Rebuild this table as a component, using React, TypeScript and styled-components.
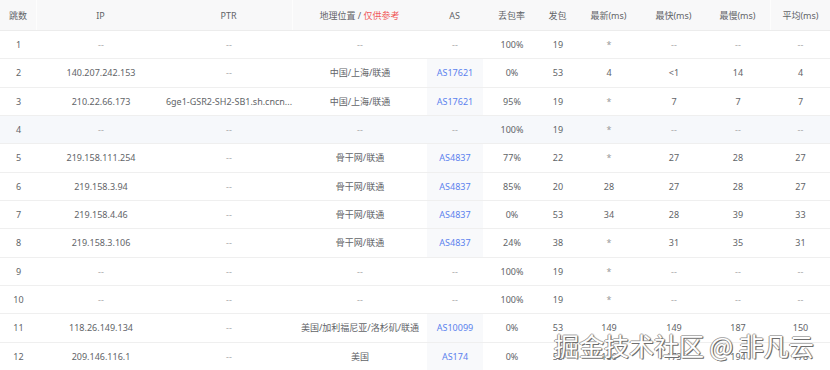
import React from "react";
import styled, { createGlobalStyle } from "styled-components";

const Global = createGlobalStyle`
  html, body { margin: 0; padding: 0; background: #ffffff; }
  body { font-family: "Noto Sans", "Noto Sans CJK SC", sans-serif; }
`;

const COLS = "37px 128px 128px 134px 56px 58px 34px 68px 62px 66px 59px";

const Wrap = styled.div`
  position: relative;
  width: 830px;
  height: 370px;
  overflow: hidden;
  background: #fff;
`;

const Table = styled.div`
  display: flex;
  flex-direction: column;
  width: 830px;
`;

const HeadRow = styled.div`
  display: grid;
  grid-template-columns: ${COLS};
  height: 31px;
  box-sizing: border-box;
  background: #f8f8f9;
  border-bottom: 1px solid #ececec;
`;

const HeadCell = styled.div<{ $sep?: boolean }>`
  display: flex;
  align-items: center;
  justify-content: center;
  font-size: 9px;
  color: #626468;
  white-space: pre;
  border-right: 1px solid ${(p) => (p.$sep ? "#fdfdfd" : "transparent")};
  &:last-child { border-right: none; }
`;

const Red = styled.span`
  color: #f05a5a;
`;

const Row = styled.div<{ $hl?: boolean }>`
  display: grid;
  grid-template-columns: ${COLS};
  height: 28.33px;
  box-sizing: border-box;
  border-bottom: 1px solid #efefef;
  background: ${(p) => (p.$hl ? "#f6f8fb" : "#ffffff")};
`;

type Tone = "text" | "dim" | "star" | "link";

const Cell = styled.div<{ $tone: Tone; $shade?: boolean }>`
  display: flex;
  align-items: center;
  justify-content: center;
  font-size: 9px;
  white-space: nowrap;
  overflow: hidden;
  background: ${(p) => (p.$shade ? "#f8f9fb" : "transparent")};
  color: ${(p) =>
    p.$tone === "link"
      ? "#5b82ee"
      : p.$tone === "dim"
      ? "#a8a8a8"
      : p.$tone === "star"
      ? "#9a9a9a"
      : "#626468"};
`;

const Watermark = styled.div`
  position: absolute;
  left: 554px;
  top: 327px;
  font-family: "Noto Sans CJK SC", sans-serif;
  font-size: 25px;
  line-height: 36px;
  color: #ffffff;
  white-space: pre;
  text-shadow: 1px 1px 0 #6e6e6e, -1px 0 0 #9a9a9a, 0 -1px 0 #b0b0b0, 1px 0 1px #777;
  pointer-events: none;
`;

const headers: React.ReactNode[] = [
  "跳数",
  "IP",
  "PTR",
  <>
    {"地理位置 / "}
    <Red>仅供参考</Red>
  </>,
  "AS",
  "丢包率",
  "发包",
  "最新(ms)",
  "最快(ms)",
  "最慢(ms)",
  "平均(ms)",
];

const seps = [true, false, true, false, false, false, false, false, false, true, false];

const rows: string[][] = [
  ["1", "--", "--", "--", "--", "100%", "19", "*", "--", "--", "--"],
  ["2", "140.207.242.153", "--", "中国/上海/联通", "AS17621", "0%", "53", "4", "<1", "14", "4"],
  ["3", "210.22.66.173", "6ge1-GSR2-SH2-SB1.sh.cncn...", "中国/上海/联通", "AS17621", "95%", "19", "*", "7", "7", "7"],
  ["4", "--", "--", "--", "--", "100%", "19", "*", "--", "--", "--"],
  ["5", "219.158.111.254", "--", "骨干网/联通", "AS4837", "77%", "22", "*", "27", "28", "27"],
  ["6", "219.158.3.94", "--", "骨干网/联通", "AS4837", "85%", "20", "28", "27", "28", "27"],
  ["7", "219.158.4.46", "--", "骨干网/联通", "AS4837", "0%", "53", "34", "28", "39", "33"],
  ["8", "219.158.3.106", "--", "骨干网/联通", "AS4837", "24%", "38", "*", "31", "35", "31"],
  ["9", "--", "--", "--", "--", "100%", "19", "*", "--", "--", "--"],
  ["10", "--", "--", "--", "--", "100%", "19", "*", "--", "--", "--"],
  ["11", "118.26.149.134", "--", "美国/加利福尼亚/洛杉矶/联通", "AS10099", "0%", "53", "149", "149", "187", "150"],
  ["12", "209.146.116.1", "--", "美国", "AS174", "0%", "53", "186", "173", "194", "178"],
];

function toneOf(v: string, col: number): Tone {
  if (v === "--") return "dim";
  if (v === "*") return "star";
  if (col === 4) return "link";
  return "text";
}

export default function App() {
  return (
    <Wrap>
      <Global />
      <Table>
        <HeadRow>
          {headers.map((h, i) => (
            <HeadCell key={i} $sep={seps[i]}>
              {h}
            </HeadCell>
          ))}
        </HeadRow>
        {rows.map((r, ri) => (
          <Row key={ri} $hl={ri === 3}>
            {r.map((v, ci) => {
              const tone = toneOf(v, ci);
              return (
                <Cell key={ci} $tone={tone} $shade={tone === "link"}>
                  {v}
                </Cell>
              );
            })}
          </Row>
        ))}
      </Table>
      <Watermark>掘金技术社区 @ 非凡云</Watermark>
    </Wrap>
  );
}
